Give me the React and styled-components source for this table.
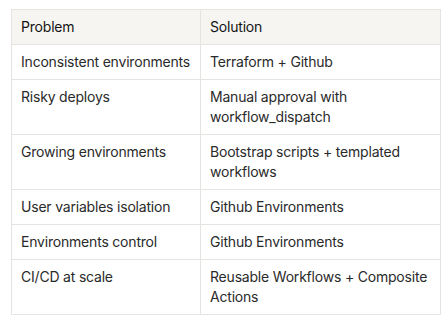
import React from "react";
import styled, { createGlobalStyle } from "styled-components";

const Global = createGlobalStyle`
  html, body { margin: 0; padding: 0; background: #ffffff; }
  body { font-family: Inter, "Noto Sans", sans-serif; }
`;

const Wrap = styled.div`
  padding: 9px 0 0 11px;
`;

const Table = styled.table`
  border-collapse: collapse;
  width: 430px;
  table-layout: fixed;
  font-size: 14px;
  line-height: 20px;
  letter-spacing: -0.2px;
  color: #2a2a2a;
`;

const Cell = styled.td`
  border: 1px solid #e6e4e1;
  padding: 7px 9px 7px 9px;
  vertical-align: top;
  text-align: left;
  font-weight: 400;
  width: ${(p) => p.$w || "auto"};
`;

const Head = styled(Cell).attrs({ as: "th" })`
  background: #f6f5f2;
  font-weight: 400;
  color: #141414;
`;

const rows = [
  ["Inconsistent environments", "Terraform + Github"],
  ["Risky deploys", "Manual approval with workflow_dispatch"],
  ["Growing environments", "Bootstrap scripts + templated workflows"],
  ["User variables isolation", "Github Environments"],
  ["Environments control", "Github Environments"],
  ["CI/CD at scale", "Reusable Workflows + Composite Actions"],
];

export default function App() {
  return (
    <Wrap>
      <Global />
      <Table>
        <thead>
          <tr>
            <Head $w="170px">Problem</Head>
            <Head>Solution</Head>
          </tr>
        </thead>
        <tbody>
          {rows.map(([a, b]) => (
            <tr key={a}>
              <Cell>{a}</Cell>
              <Cell>{b}</Cell>
            </tr>
          ))}
        </tbody>
      </Table>
    </Wrap>
  );
}
